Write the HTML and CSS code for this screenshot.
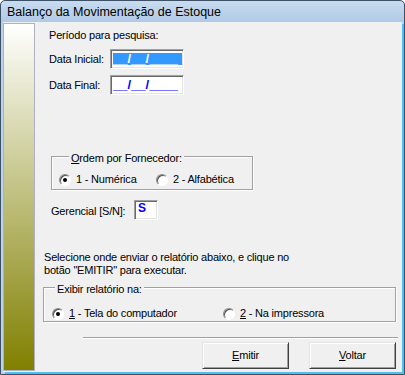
FILE: index.html
```html
<!DOCTYPE html>
<html lang="pt">
<head>
    <meta charset="UTF-8">
    <title>Balanço da Movimentação de Estoque</title>
    <link rel="stylesheet" href="styles.css">
</head>
<body>
    <div class="window">
        <div class="titlebar">Balanço da Movimentação de Estoque</div>
        <div class="client">
            <div class="sidebar"></div>
            <div class="main">
                <p class="caption">Período para pesquisa:</p>
                <div class="field-row">
                    <span class="field-label">Data Inicial:</span>
                    <span class="date-box"><span class="mask selected">__/__/____</span></span>
                </div>
                <div class="field-row row-final">
                    <span class="field-label">Data Final:</span>
                    <span class="date-box"><span class="mask">__/__/____</span></span>
                </div>

                <div class="group group-ordem">
                    <span class="group-title"><u>O</u>rdem por Fornecedor:</span>
                    <div class="radio-row">
                        <span class="option opt-num"><span class="radio checked"></span>1 - Numérica</span>
                        <span class="option"><span class="radio"></span>2 - Alfabética</span>
                    </div>
                </div>

                <div class="field-row row-gerencial">
                    <span class="field-label">Gerencial [S/N]:</span>
                    <span class="flag-box">S</span>
                </div>

                <p class="hint">Selecione onde enviar o relatório abaixo, e clique no<br>botão "EMITIR" para executar.</p>

                <div class="group group-saida">
                    <span class="group-title">Exibir relatório na:</span>
                    <div class="radio-row">
                        <span class="option opt-tela"><span class="radio checked"></span><u>1</u>&nbsp;- Tela do computador</span>
                        <span class="option"><span class="radio"></span><u>2</u>&nbsp;- Na impressora</span>
                    </div>
                </div>

                <div class="separator"></div>

                <div class="buttons">
                    <button class="btn"><u>E</u>mitir</button>
                    <button class="btn"><u>V</u>oltar</button>
                </div>
            </div>
        </div>
    </div>
</body>
</html>
```

FILE: styles.css
```css
body {
    margin: 0;
    font-family: "Liberation Sans", Arial, sans-serif;
    font-size: 11px;
    letter-spacing: -0.2px;
    color: #000000;
}
.window {
    width: 405px;
    height: 375px;
    box-sizing: border-box;
    border: 1px solid #3d5166;
    border-radius: 5px 5px 0 0;
    padding: 0 2px 2px 2px;
    display: flex;
    flex-direction: column;
    background: linear-gradient(#c8dbf0, #afc9e6) 0 0 / 100% 22px no-repeat, #bcd2ea;
    overflow: hidden;
}
.titlebar {
    height: 21px;
    box-sizing: border-box;
    padding: 2px 0 0 4px;
    line-height: 19px;
    font-size: 12.5px;
    letter-spacing: 0;
    color: #000000;
}
.client {
    flex: 1;
    display: flex;
    padding: 1px 0;
    background-color: #f0f0f0;
    box-shadow: 2px 2px 0 #4cc1ef;
}
.sidebar {
    width: 32px;
    box-sizing: border-box;
    border: 1px solid #b0b0c2;
    background: linear-gradient(#ffffff, #808000);
}
.main {
    flex: 1;
    padding-top: 6px;
}
.caption {
    margin: 0 0 0 14px;
    line-height: 13px;
}
.field-row {
    display: flex;
    align-items: center;
    margin: 7px 0 0 14px;
    line-height: 13px;
}
.row-final {
    margin-top: 6px;
}
.field-label {
    width: 61px;
}
.date-box, .flag-box {
    box-sizing: border-box;
    border: 1px solid;
    border-color: #a0a0a0 #ffffff #ffffff #a0a0a0;
    box-shadow: inset 1px 1px 0 #696969, inset -1px -1px 0 #e3e3e3;
    background-color: #ffffff;
}
.date-box {
    width: 74px;
    height: 20px;
    padding: 3px 1px 1px 2px;
}
.mask {
    display: block;
    height: 12px;
    line-height: 12px;
    font-size: 13px;
    font-weight: bold;
    letter-spacing: 0;
    white-space: nowrap;
    color: #0000ff;
}
.mask.selected {
    background-color: #3399ff;
    color: #ffffff;
}
.group {
    box-sizing: border-box;
    border: 1px solid #a0a0a0;
    box-shadow: inset 1px 1px 0 #ffffff, 1px 1px 0 #ffffff;
}
.group-title {
    display: inline-block;
    vertical-align: top;
    margin: -5px 0 0 17px;
    padding: 0 2px;
    line-height: 13px;
    background-color: #f0f0f0;
}
.radio-row {
    display: flex;
    line-height: 13px;
}
.option {
    display: inline-flex;
    align-items: center;
}
.radio {
    position: relative;
    width: 12px;
    height: 12px;
    box-sizing: border-box;
    margin-right: 5px;
    border-radius: 50%;
    border: 1px solid;
    border-color: #8a8a8a #ffffff #ffffff #8a8a8a;
    box-shadow: inset 1px 1px 0 #505050;
    background-color: #ffffff;
}
.radio.checked::after {
    content: "";
    position: absolute;
    left: 3px;
    top: 3px;
    width: 4px;
    height: 4px;
    border-radius: 50%;
    background-color: #000000;
}
.group-ordem {
    width: 202px;
    height: 34px;
    margin: 61px 0 0 16px;
}
.group-ordem .radio-row {
    margin: 4px 0 0 7px;
}
.opt-num {
    width: 97px;
}
.row-gerencial {
    margin: 10px 0 0 16px;
}
.row-gerencial .field-label {
    width: 83px;
    margin-top: 3px;
}
.flag-box {
    width: 24px;
    height: 20px;
    padding: 1px 0 0 3px;
    line-height: 13px;
    font-size: 12px;
    font-weight: bold;
    color: #0000ff;
}
.hint {
    margin: 31px 0 0 9px;
    line-height: 13px;
}
.group-saida {
    width: 353px;
    height: 35px;
    margin: 10px 0 0 8px;
}
.group-saida .group-title {
    margin-left: 11px;
}
.group-saida .radio-row {
    margin: 7px 0 0 8px;
}
.opt-tela {
    width: 171px;
}
.separator {
    width: 315px;
    margin: 15px 0 0 48px;
    border-top: 1px solid #a0a0a0;
    border-bottom: 1px solid #ffffff;
}
.buttons {
    display: flex;
    gap: 20px;
    margin: 3px 0 0 167px;
}
.btn {
    width: 87px;
    height: 27px;
    box-sizing: border-box;
    padding: 0;
    font-family: "Liberation Sans", Arial, sans-serif;
    font-size: 11px;
    line-height: 13px;
    letter-spacing: -0.2px;
    color: #000000;
    background-color: #f0f0f0;
    border: 1px solid;
    border-color: #e3e3e3 #404040 #404040 #e3e3e3;
    box-shadow: inset 1px 1px 0 #ffffff, inset -1px -1px 0 #a0a0a0;
}
```
